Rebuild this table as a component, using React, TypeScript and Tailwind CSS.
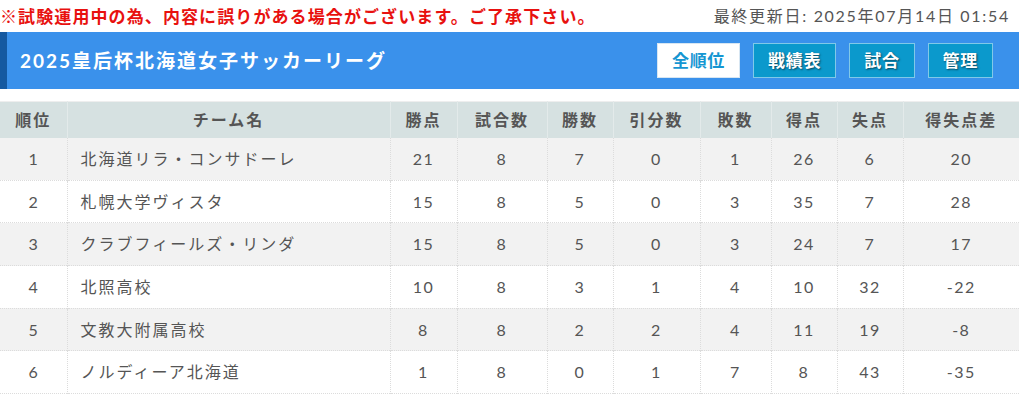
const FONT = "font-['Lato','Noto_Sans_CJK_JP',sans-serif]";

const columns = [
  { label: "順位", w: "w-[67px]" },
  { label: "チーム名", w: "w-[323px]" },
  { label: "勝点", w: "w-[67px]" },
  { label: "試合数", w: "w-[90px]" },
  { label: "勝数", w: "w-[66px]" },
  { label: "引分数", w: "w-[87px]" },
  { label: "敗数", w: "w-[71px]" },
  { label: "得点", w: "w-[66px]" },
  { label: "失点", w: "w-[66px]" },
  { label: "得失点差", w: "w-[116px]" },
];

const standings = [
  { rank: 1, team: "北海道リラ・コンサドーレ", pts: 21, played: 8, win: 7, draw: 0, lose: 1, gf: 26, ga: 6, diff: 20 },
  { rank: 2, team: "札幌大学ヴィスタ", pts: 15, played: 8, win: 5, draw: 0, lose: 3, gf: 35, ga: 7, diff: 28 },
  { rank: 3, team: "クラブフィールズ・リンダ", pts: 15, played: 8, win: 5, draw: 0, lose: 3, gf: 24, ga: 7, diff: 17 },
  { rank: 4, team: "北照高校", pts: 10, played: 8, win: 3, draw: 1, lose: 4, gf: 10, ga: 32, diff: -22 },
  { rank: 5, team: "文教大附属高校", pts: 8, played: 8, win: 2, draw: 2, lose: 4, gf: 11, ga: 19, diff: -8 },
  { rank: 6, team: "ノルディーア北海道", pts: 1, played: 8, win: 0, draw: 1, lose: 7, gf: 8, ga: 43, diff: -35 },
];

const navButtons = [
  { label: "全順位", active: true },
  { label: "戦績表", active: false },
  { label: "試合", active: false },
  { label: "管理", active: false },
];

export default function App() {
  return (
    <div className={`w-[1024px] h-[398px] overflow-hidden bg-white ${FONT}`}>
      {/* ── お知らせ + 更新日 ─────────────────────────── */}
      <div className="h-[32px] flex items-center justify-between pr-[14px]">
        <p className="text-[17px] font-bold text-[#e8110f] tracking-[1.1px] leading-none">
          ※試験運用中の為、内容に誤りがある場合がございます。ご了承下さい。
        </p>
        <p className="text-[16px] text-[#555] tracking-[1.7px] leading-none">
          最終更新日: 2025年07月14日 01:54
        </p>
      </div>

      {/* ── タイトルバー ─────────────────────────────── */}
      <div className="w-[1019px] h-[57px] bg-[#3a91eb] border-l-[7px] border-[#1559a0] flex items-center justify-between pl-[13px] pr-[26px]">
        <h1 className="text-[19px] font-bold text-white tracking-[2px] leading-none">
          2025皇后杯北海道女子サッカーリーグ
        </h1>
        <div className="flex items-center gap-[13px]">
          {navButtons.map(b => (
            <button
              key={b.label}
              className={
                b.active
                  ? "h-[35px] px-[14px] bg-white border border-[#d7e6f2] text-[#1596d2] text-[17px] font-bold tracking-[0.7px] leading-none"
                  : "h-[35px] px-[14px] bg-[#0b99cc] border border-[#80c9e8] text-white text-[17px] font-bold tracking-[0.7px] leading-none [text-shadow:1px_1px_2px_rgba(0,0,0,0.55)]"
              }
            >
              {b.label}
            </button>
          ))}
        </div>
      </div>

      {/* ── 順位表 ───────────────────────────────────── */}
      <table className="mt-[12px] w-[1019px] table-fixed border-collapse text-[16px] text-[#555]">
        <thead>
          <tr className="h-[36px] bg-[#d6e1e1] border-t border-[#eeeeee]">
            {columns.map(c => (
              <th key={c.label} className={`${c.w} font-bold tracking-[2px] text-center border-x border-[#e3eaea] first:border-l-0 last:border-r-0`}>
                {c.label}
              </th>
            ))}
          </tr>
        </thead>
        <tbody>
          {standings.map((r, i) => (
            <tr key={r.rank} className={`h-[42.7px] border-b border-dotted border-[#dcdcdc] ${i % 2 === 0 ? "bg-[#f2f2f2]" : "bg-white"}`}>
              <td className="text-center border-r border-dotted border-[#dcdcdc]">{r.rank}</td>
              <td className="pl-[13px] tracking-[2px] border-r border-dotted border-[#dcdcdc]">{r.team}</td>
              {[r.pts, r.played, r.win, r.draw, r.lose, r.gf, r.ga, r.diff].map((v, j) => (
                <td key={j} className="text-center tracking-[1.5px] border-r border-dotted border-[#dcdcdc] last:border-r-0">
                  {v}
                </td>
              ))}
            </tr>
          ))}
        </tbody>
      </table>
    </div>
  );
}
